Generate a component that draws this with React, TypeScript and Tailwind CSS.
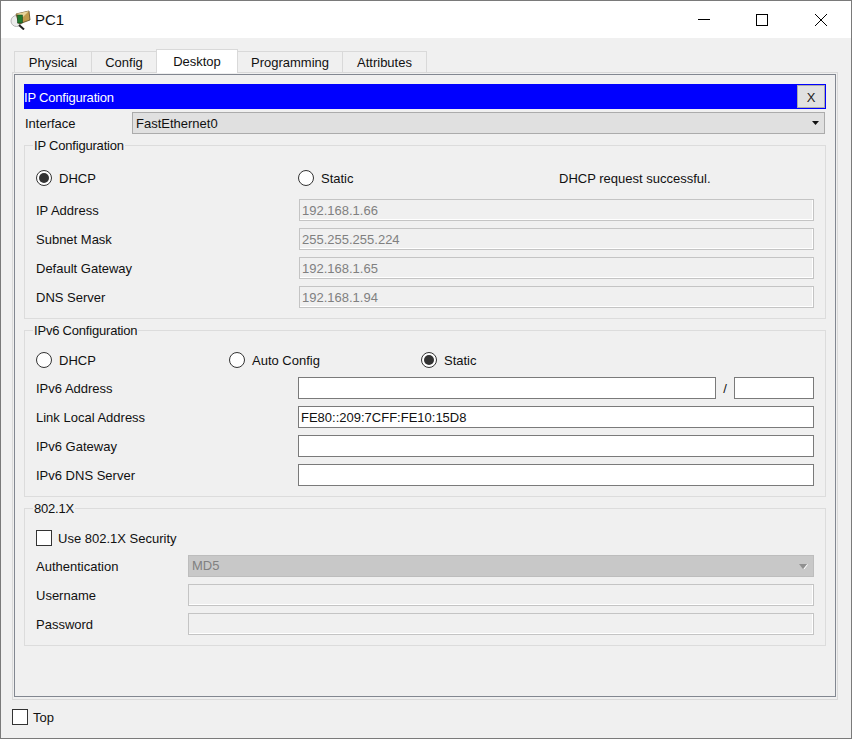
// PC1 desktop tab, IP Configuration dialog

const labelClass = 'pt-[2px] text-[13px] leading-[20px] text-[#111111]'

function Radio({ checked = false }: { checked?: boolean }) {
  return (
    <span className="flex h-4 w-4 shrink-0 items-center justify-center rounded-full border border-[#333333] bg-white">
      {checked && <span className="h-[10px] w-[10px] rounded-full bg-[#333333]" />}
    </span>
  )
}

function Checkbox() {
  return <span className="block h-4 w-4 shrink-0 border border-[#333333] bg-white" />
}

function RadioLabel({ text, checked, className = '' }: { text: string; checked?: boolean; className?: string }) {
  return (
    <div className={`flex h-[22px] items-center gap-[7px] ${className}`}>
      <Radio checked={checked} />
      <span className={labelClass}>{text}</span>
    </div>
  )
}

function Field({ value = '', disabled = false, className = '' }: { value?: string; disabled?: boolean; className?: string }) {
  return (
    <input
      readOnly
      value={value}
      className={`h-[22px] min-w-0 px-[2px] text-[13px] outline-none ${
        disabled
          ? 'border border-[#c4c4c4] bg-[#f0f0f0] text-[#808080] shadow-[inset_-1px_-1px_0_#ffffff]'
          : 'border border-[#7a7a7a] bg-white text-[#111111]'
      } ${className}`}
    />
  )
}

function Group({ title, children }: { title: string; children: React.ReactNode }) {
  return (
    <fieldset className="border border-[#dcdcdc] px-[11px] pb-[10px]">
      <legend className="-ml-[3px] px-[1px] text-[13px] leading-[15px] tracking-[-0.2px] text-[#111111]">{title}</legend>
      {children}
    </fieldset>
  )
}

function LabeledField({ label, value, disabled, labelWidth = 'w-[263px]' }: { label: string; value?: string; disabled?: boolean; labelWidth?: string }) {
  return (
    <div className="flex h-[22px]">
      <span className={`${labelClass} shrink-0 ${labelWidth}`}>{label}</span>
      <Field value={value} disabled={disabled} className="flex-1" />
    </div>
  )
}

function PcIcon() {
  return (
    <svg width="21" height="20" viewBox="0 0 21 20" className="shrink-0">
      <ellipse cx="6.5" cy="11" rx="5.5" ry="5.5" fill="#ececec" stroke="#b5b5b5" />
      <path d="M6 4 L19 1 L20 10 L9 14 Z" fill="#c09a4c" stroke="#5a4520" strokeWidth="0.8" />
      <path d="M6 4 L19 1 L13 7 Z" fill="#e8d49a" />
      <rect x="7.5" y="5" width="5" height="8" fill="#1f7a2e" stroke="#0d3d16" strokeWidth="0.5" />
      <path d="M9 15 L14 19.5" stroke="#222222" strokeWidth="2" />
    </svg>
  )
}

const tabs = ['Physical', 'Config', 'Desktop', 'Programming', 'Attributes']
const tabWidths = ['w-[78px]', '-ml-px w-[66px]', '-ml-px w-[82px]', '-ml-px w-[106px]', '-ml-px w-[85px]']

export default function App() {
  return (
    <div className="flex h-[739px] w-[852px] flex-col border border-[#7a7a7a] bg-[#f0f0f0] font-['Liberation_Sans',Arial,sans-serif]">
      {/* Title bar */}
      <div className="flex h-[37px] shrink-0 items-center bg-white pl-[9px]">
        <PcIcon />
        <span className="ml-[4px] pt-[2px] text-[15px] text-[#111111]">PC1</span>
        <div className="ml-auto flex items-center pr-[24px]">
          <span className="mr-[46px] block h-px w-[12px] bg-black" />
          <span className="mr-[47px] block h-[12px] w-[12px] border border-black" />
          <svg width="12" height="12" viewBox="0 0 12 12">
            <path d="M0 0 L12 12 M12 0 L0 12" stroke="#000000" strokeWidth="1" />
          </svg>
        </div>
      </div>

      {/* Tabs */}
      <div className="flex h-[34px] shrink-0 items-end pl-[13px]">
        {tabs.map((tab, i) =>
          tab === 'Desktop' ? (
            <div
              key={tab}
              className={`z-10 -mb-px flex h-[24px] items-center justify-center border border-b-0 border-[#d9d9d9] bg-white text-[13px] text-[#111111] ${tabWidths[i]}`}
            >
              {tab}
            </div>
          ) : (
            <div
              key={tab}
              className={`flex h-[21px] items-center justify-center border border-b-0 border-[#d9d9d9] bg-[#f0f0f0] pt-[2px] text-[13px] text-[#111111] ${tabWidths[i]}`}
            >
              {tab}
            </div>
          ),
        )}
      </div>

      {/* Tab pane */}
      <div className="ml-[11px] mr-[13px] h-[628px] shrink-0 border border-[#d9d9d9] pb-[2px] pl-px pr-px pt-px">
        <div className="flex h-full flex-col border border-[#828790] px-[9px] pt-[9px]">
          <div className="flex h-[25px] shrink-0 items-center justify-between bg-[#0000ff] pr-px">
            <span className="pt-[2px] text-[13px] tracking-[-0.2px] text-white">IP Configuration</span>
            <button className="h-[23px] w-[28px] border border-[#ababab] bg-[#e1e1e1] pt-[2px] text-[13px] text-[#222222]">X</button>
          </div>

          <div className="mt-[3px] flex h-[22px] shrink-0 items-center">
            <span className="w-[108px] pl-px pt-[2px] text-[13px] text-[#111111]">Interface</span>
            <div className="mr-px flex h-[22px] flex-1 items-center justify-between border border-[#ababab] bg-[#e0e0e0] pl-[3px] pr-[5px] text-[13px] text-[#111111]">
              <span className="pt-[2px]">FastEthernet0</span>
              <svg width="7" height="4" viewBox="0 0 7 4">
                <path d="M0 0 H7 L3.5 4 Z" fill="#111111" />
              </svg>
            </div>
          </div>

          <div className="mt-[4px] flex flex-col gap-[4px]">
            <Group title="IP Configuration">
              <div className="mt-[14px] flex items-center">
                <RadioLabel text="DHCP" checked className="w-[262px]" />
                <RadioLabel text="Static" className="w-[261px]" />
                <span className={labelClass}>DHCP request successful.</span>
              </div>
              <div className="mt-[10px] flex flex-col gap-[7px]">
                <LabeledField label="IP Address" value="192.168.1.66" disabled />
                <LabeledField label="Subnet Mask" value="255.255.255.224" disabled />
                <LabeledField label="Default Gateway" value="192.168.1.65" disabled />
                <LabeledField label="DNS Server" value="192.168.1.94" disabled />
              </div>
            </Group>

            <Group title="IPv6 Configuration">
              <div className="mt-[11px] flex items-center">
                <RadioLabel text="DHCP" className="w-[193px]" />
                <RadioLabel text="Auto Config" className="w-[192px]" />
                <RadioLabel text="Static" checked />
              </div>
              <div className="mt-[6px] flex flex-col gap-[7px]">
                <div className="flex h-[22px]">
                  <span className={`${labelClass} w-[262px] shrink-0`}>IPv6 Address</span>
                  <Field className="flex-1" />
                  <span className={`${labelClass} w-[18px] text-center`}>/</span>
                  <Field className="w-[80px]" />
                </div>
                <LabeledField label="Link Local Address" value="FE80::209:7CFF:FE10:15D8" labelWidth="w-[262px]" />
                <LabeledField label="IPv6 Gateway" labelWidth="w-[262px]" />
                <LabeledField label="IPv6 DNS Server" labelWidth="w-[262px]" />
              </div>
            </Group>

            <Group title="802.1X">
              <div className="mt-[11px] flex h-[22px] items-center gap-[6px]">
                <Checkbox />
                <span className={labelClass}>Use 802.1X Security</span>
              </div>
              <div className="mt-[6px] flex flex-col gap-[7px]">
                <div className="flex h-[22px]">
                  <span className={`${labelClass} w-[152px] shrink-0`}>Authentication</span>
                  <div className="flex flex-1 items-center justify-between border border-[#bdbdbd] bg-[#c8c8c8] pl-[3px] pr-[5px] text-[13px] text-[#808080]">
                    <span>MD5</span>
                    <svg width="9" height="5" viewBox="0 0 9 5">
                      <path d="M0 0 H8 L4 5 Z" fill="#909090" />
                      <path d="M8.5 0.5 L5 5" stroke="#ffffff" strokeWidth="1" />
                    </svg>
                  </div>
                </div>
                <LabeledField label="Username" disabled labelWidth="w-[152px]" />
                <LabeledField label="Password" disabled labelWidth="w-[152px]" />
              </div>
            </Group>
          </div>
        </div>
      </div>

      {/* Bottom bar */}
      <div className="flex flex-1 items-center gap-[5px] pb-[4px] pl-[11px]">
        <Checkbox />
        <span className={labelClass}>Top</span>
      </div>
    </div>
  )
}
